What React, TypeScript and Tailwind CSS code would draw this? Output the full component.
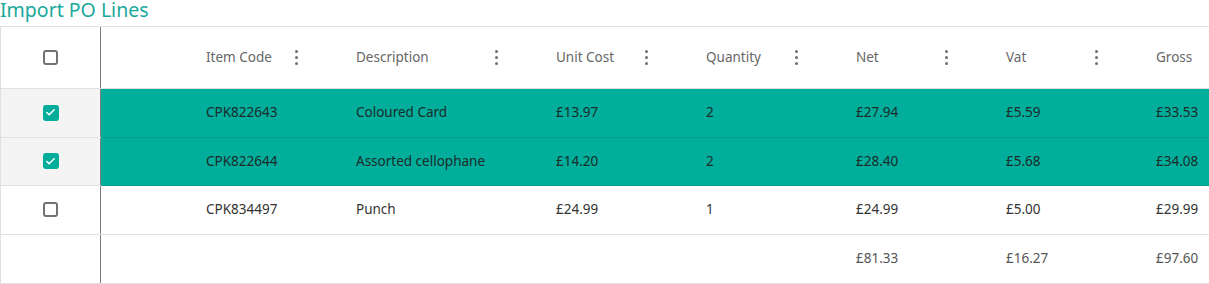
import { Check } from 'lucide-react';

type Line = {
  code: string;
  description: string;
  unitCost: string;
  quantity: string;
  net: string;
  vat: string;
  gross: string;
  selected: boolean;
};

const lines: Line[] = [
  { code: 'CPK822643', description: 'Coloured Card', unitCost: '£13.97', quantity: '2', net: '£27.94', vat: '£5.59', gross: '£33.53', selected: true },
  { code: 'CPK822644', description: 'Assorted cellophane', unitCost: '£14.20', quantity: '2', net: '£28.40', vat: '£5.68', gross: '£34.08', selected: true },
  { code: 'CPK834497', description: 'Punch', unitCost: '£24.99', quantity: '1', net: '£24.99', vat: '£5.00', gross: '£29.99', selected: false },
];

const columns = [
  { label: 'Item Code', width: 'w-[150px]' },
  { label: 'Description', width: 'w-[200px]' },
  { label: 'Unit Cost', width: 'w-[150px]' },
  { label: 'Quantity', width: 'w-[150px]' },
  { label: 'Net', width: 'w-[150px]' },
  { label: 'Vat', width: 'w-[150px]' },
  { label: 'Gross', width: 'w-[150px]' },
];

function Kebab() {
  return (
    <span className="flex flex-col items-center gap-[3px]">
      <span className="h-[3px] w-[3px] rounded-full bg-[#6f6f6f]" />
      <span className="h-[3px] w-[3px] rounded-full bg-[#6f6f6f]" />
      <span className="h-[3px] w-[3px] rounded-full bg-[#6f6f6f]" />
    </span>
  );
}

function Checkbox({ checked }: { checked: boolean }) {
  if (checked) {
    return (
      <span className="flex h-[16px] w-[16px] items-center justify-center rounded-[3px] bg-[#00ad9a]">
        <Check className="h-[11px] w-[11px] text-white" strokeWidth={3.5} />
      </span>
    );
  }
  return <span className="block h-[15px] w-[15px] rounded-[3px] border-2 border-[#727272]" />;
}

function SelectCell({ children, shaded }: { children?: React.ReactNode; shaded?: boolean }) {
  return (
    <div
      className={`flex w-[100px] shrink-0 items-center justify-center border-r border-[#7d7d7d] ${shaded ? 'bg-[#f4f4f4]' : 'bg-white'}`}
    >
      {children}
    </div>
  );
}

export default function App() {
  return (
    <div className="w-[1209px] bg-white font-['Noto_Sans','Open_Sans',sans-serif]">
      <div className="h-[26px]">
        <h1 className="text-[19.5px] leading-[20px] text-[#1aa99b]">Import PO Lines</h1>
      </div>

      <div className="overflow-hidden border-t border-l border-[#e0e0e0]">
        {/* header */}
        <div className="flex h-[62px] border-b border-[#e0e0e0]">
          <SelectCell>
            <Checkbox checked={false} />
          </SelectCell>
          <div className="w-[55px] shrink-0" />
          {columns.map((c) => (
            <div key={c.label} className={`${c.width} shrink-0 flex items-center justify-between pl-[50px] pr-[8px]`}>
              <span className="text-[13.5px] text-[#666]">{c.label}</span>
              <Kebab />
            </div>
          ))}
        </div>

        {/* lines */}
        {lines.map((l) => {
          const cells = [l.code, l.description, l.unitCost, l.quantity, l.net, l.vat, l.gross];
          return (
            <div key={l.code} className="flex h-[48.5px] border-b border-[#e0e0e0]">
              <SelectCell shaded={l.selected}>
                <Checkbox checked={l.selected} />
              </SelectCell>
              <div
                className={`flex grow ${l.selected ? 'bg-[#00ae9b] border-b border-[#0a9e8e] -mb-px' : 'bg-white'}`}
              >
                <div className="w-[55px] shrink-0" />
                {cells.map((v, i) => (
                  <div
                    key={i}
                    className={`${columns[i].width} shrink-0 flex items-center pl-[50px] pb-px text-[13.5px] ${l.selected ? 'text-[#1d2b2a]' : 'text-[#333]'}`}
                  >
                    {v}
                  </div>
                ))}
              </div>
            </div>
          );
        })}

        {/* totals */}
        <div className="flex h-[49px] border-b border-[#e0e0e0]">
          <SelectCell />
          <div className="w-[55px] shrink-0" />
          {['', '', '', '', '£81.33', '£16.27', '£97.60'].map((v, i) => (
            <div key={i} className={`${columns[i].width} shrink-0 flex items-center pl-[50px] text-[13.5px] text-[#555]`}>
              {v}
            </div>
          ))}
        </div>
      </div>
    </div>
  );
}
